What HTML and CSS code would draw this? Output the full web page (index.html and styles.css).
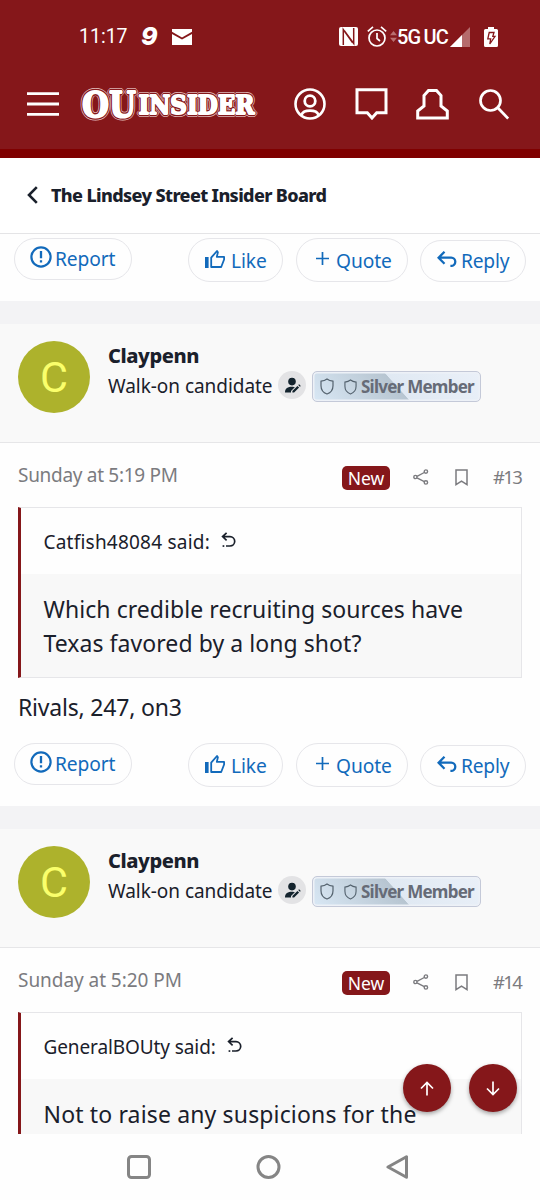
FILE: index.html
```
<!DOCTYPE html>
<html lang="en">
<head>
  <meta charset="UTF-8">
  <meta name="viewport" content="width=device-width, initial-scale=1.0">
  <title>OUInsider</title>
  <link rel="stylesheet" href="styles.css">
</head>
<body>
  <svg class="defs" width="0" height="0">
    <symbol id="i-report" viewBox="0 0 22 22"><circle cx="11" cy="11" r="9.6" fill="none" stroke="currentColor" stroke-width="2.2"/><path d="M11 5v7.3M11 14.2v2.3" fill="none" stroke="currentColor" stroke-width="2.3"/></symbol>
    <symbol id="i-like" viewBox="0 0 20 18"><path d="M0 7h3.6v11H0z" fill="currentColor"/><path d="M6.2 7.6L12 1l.9 1.2-1.1 4.7h7.3v2.6L16.2 17H6.2z" fill="none" stroke="currentColor" stroke-width="1.8" stroke-linejoin="round"/></symbol>
    <symbol id="i-plus" viewBox="0 0 13 13"><path d="M6.5 0v13M0 6.5h13" fill="none" stroke="currentColor" stroke-width="1.7"/></symbol>
    <symbol id="i-reply" viewBox="0 0 20 16"><path d="M7.5.8L1.6 6.7l5.900 6M1.6 6.7h12.600a4.100 4.100 0 0 1 0 8.200h-.8" fill="none" stroke="currentColor" stroke-width="2.300"/></symbol>
    <symbol id="i-edit" viewBox="0 0 28 28"><circle cx="14" cy="10.6" r="3.8" fill="currentColor"/><path d="M7 21.4c0-4 3-5.6 7-5.6 1.400 0 2.300.2 2.800.4L13 20v1.400zM14.400 21.600v-1.700l5-5 1.700 1.700-5 5zM20.200 14.100l.9-.9 1.700 1.700-.9.9z" fill="currentColor"/></symbol>
    <symbol id="i-shield" viewBox="0 0 14 17"><path d="M7 1c1.800 1.400 3.600 2 6 2.200v4.600C13 12 10.500 14.800 7 16 3.500 14.800 1 12 1 7.800V3.200C3.400 3 5.200 2.400 7 1z" fill="none" stroke="currentColor" stroke-width="1.200"/></symbol>
    <symbol id="i-share" viewBox="0 0 16 16"><g fill="none" stroke="currentColor" stroke-width="1.400"><circle cx="2.400" cy="8" r="1.600"/><circle cx="12.900" cy="2.600" r="1.700"/><circle cx="12.900" cy="13.400" r="1.700"/><path d="M4 7.300l7.300-3.800M4 8.800l7.300 3.800"/></g></symbol>
    <symbol id="i-mark" viewBox="0 0 13 17"><path d="M1 1h11v14.600l-5.500-3.400L1 15.600z" fill="none" stroke="currentColor" stroke-width="1.500"/></symbol>
    <symbol id="i-jump" viewBox="0 0 15 16"><path d="M5.600.9L1.600 4.600l4 3.700M1.600 4.600h7.400a4.700 4.700 0 0 1 0 9.400H5" fill="none" stroke="currentColor" stroke-width="1.700"/><path d="M1.600 13.200h1.700v1.700H1.600z" fill="currentColor"/></symbol>
  </svg>

  <div class="screen">
    <header class="header">
      <div class="status">
        <span class="clock">11:17</span>
        <span class="nine">9</span>
        <svg class="mail" width="20" height="16" viewBox="0 0 20 16"><path d="M0 0h20v2.800L10 8.400 0 2.800zM0 5l10 5.500L20 5v11H0z" fill="#fff"/></svg>
        <svg class="nfc" width="19" height="19" viewBox="0 0 19 19"><rect width="19" height="19" rx="2" fill="#fff"/><path d="M4.300 18V2.500l9.200 13M14.700 1v15.500L5.500 4" fill="none" stroke="#85171a" stroke-width="1.500"/></svg>
        <svg class="alarm" width="20" height="21" viewBox="0 0 20 21"><g fill="none" stroke="#fff" stroke-width="1.700"><circle cx="10" cy="12" r="8"/><path d="M10 7v5.500l3 2.500M.8 5.300L6 .9M14 .9l5.200 4.400"/></g></svg>
        <svg class="updown" width="7" height="11" viewBox="0 0 7 11"><path d="M3.500 0L7 4.300H0zM3.500 11L0 6.700h7z" fill="#b96f70"/></svg>
        <span class="net">5G<span>UC</span></span>
        <svg class="signal" width="20" height="20" viewBox="0 0 20 20"><path d="M20 0v20H0z" fill="#b56b6c"/><path d="M12 8v12H0z" fill="#fff"/></svg>
        <svg class="battery" width="14" height="20" viewBox="0 0 14 20"><path d="M4 0h6v2h2.500A1.500 1.500 0 0 1 14 3.500v15a1.500 1.500 0 0 1-1.500 1.500h-11A1.500 1.500 0 0 1 0 18.500v-15A1.500 1.500 0 0 1 1.500 2H4z" fill="#fff"/><path d="M5.200 5.500H10L8.800 9.300H11L5.800 17l.9-5.200H3.800z" fill="none" stroke="#85171a" stroke-width="1.300"/></svg>
      </div>
      <div class="topbar">
        <svg class="burger" width="32" height="24" viewBox="0 0 32 24"><path d="M0 1.700h32M0 12h32M0 22.300h32" stroke="#fff" stroke-width="2.800"/></svg>
        <svg class="logo" width="179" height="36" viewBox="0 0 179 36">
          <defs>
            <g id="wordmark">
              <text class="ou" x="3" y="31" textLength="54" lengthAdjust="spacingAndGlyphs">OU</text>
              <text class="insider" x="59.500" y="28" textLength="116" lengthAdjust="spacingAndGlyphs">INSIDER</text>
            </g>
          </defs>
          <use class="logo-edge" href="#wordmark"/>
          <use class="logo-gap" href="#wordmark"/>
          <use class="logo-face" href="#wordmark"/>
        </svg>
        <svg class="account" width="32" height="32" viewBox="0 0 32 32"><g fill="none" stroke="#fff"><circle cx="16" cy="16" r="14.500" stroke-width="2.600"/><circle cx="16" cy="13" r="5.300" stroke-width="2.800"/><path d="M7.500 27c1-3.400 4.300-4.400 8.500-4.400s7.500 1 8.500 4.400" stroke-width="2.600"/></g></svg>
        <svg class="chat" width="33" height="32" viewBox="0 0 33 32"><path d="M2 1.800h29v23h-9.300L17 30l-4.700-5.200H2z" fill="none" stroke="#fff" stroke-width="3"/></svg>
        <svg class="bell" width="33" height="31" viewBox="0 0 33 31"><path d="M12.500 1.600h8L25 6.500V17l6.300 5v6.900H1.700V22L8 17V6.500z" fill="none" stroke="#fff" stroke-width="3"/></svg>
        <svg class="search" width="30" height="31" viewBox="0 0 30 31"><circle cx="11.500" cy="11.500" r="10" fill="none" stroke="#fff" stroke-width="2.700"/><path d="M18.800 18.800l10.400 10.800" stroke="#fff" stroke-width="2.800"/></svg>
      </div>
    </header>

    <nav class="crumb">
      <svg width="11" height="18" viewBox="0 0 11 18"><path d="M9.800 1.200L2 9l7.800 7.800" fill="none" stroke="#1a202b" stroke-width="2.600"/></svg>
      <span>The Lindsey Street Insider Board</span>
    </nav>

    <main class="thread">
      <div class="actions">
        <a class="pill report"><svg><use href="#i-report"/></svg><span>Report</span></a>
        <a class="pill like"><svg><use href="#i-like"/></svg><span>Like</span></a>
        <a class="pill quote-btn"><svg><use href="#i-plus"/></svg><span>Quote</span></a>
        <a class="pill reply"><svg><use href="#i-reply"/></svg><span>Reply</span></a>
      </div>

      <article class="post">
        <div class="user">
          <div class="avatar">C</div>
          <div class="user-info">
            <div class="name">Claypenn</div>
            <div class="rank">
              <span class="rank-title">Walk-on candidate</span>
              <svg class="edit"><use href="#i-edit"/></svg>
              <span class="silver"><svg class="shield"><use href="#i-shield"/></svg><svg class="shield small"><use href="#i-shield"/></svg><span>Silver Member</span></span>
            </div>
          </div>
        </div>
        <div class="meta">
          <span class="date date-narrow">Sunday at 5:19 PM</span>
          <span class="new">New</span>
          <svg class="share"><use href="#i-share"/></svg>
          <svg class="mark"><use href="#i-mark"/></svg>
          <span class="num">#13</span>
        </div>
        <blockquote class="quote">
          <div class="quote-title"><span class="said">Catfish48084 said:</span><svg><use href="#i-jump"/></svg></div>
          <div class="quote-text">Which credible recruiting sources have<br>Texas favored by a long shot?</div>
        </blockquote>
        <p class="text">Rivals, 247, on3</p>
        <div class="actions">
          <a class="pill report"><svg><use href="#i-report"/></svg><span>Report</span></a>
          <a class="pill like"><svg><use href="#i-like"/></svg><span>Like</span></a>
          <a class="pill quote-btn"><svg><use href="#i-plus"/></svg><span>Quote</span></a>
          <a class="pill reply"><svg><use href="#i-reply"/></svg><span>Reply</span></a>
        </div>
      </article>

      <article class="post">
        <div class="user">
          <div class="avatar">C</div>
          <div class="user-info">
            <div class="name">Claypenn</div>
            <div class="rank">
              <span class="rank-title">Walk-on candidate</span>
              <svg class="edit"><use href="#i-edit"/></svg>
              <span class="silver"><svg class="shield"><use href="#i-shield"/></svg><svg class="shield small"><use href="#i-shield"/></svg><span>Silver Member</span></span>
            </div>
          </div>
        </div>
        <div class="meta">
          <span class="date">Sunday at 5:20 PM</span>
          <span class="new">New</span>
          <svg class="share"><use href="#i-share"/></svg>
          <svg class="mark"><use href="#i-mark"/></svg>
          <span class="num">#14</span>
        </div>
        <blockquote class="quote">
          <div class="quote-title"><span class="said general">GeneralBOUty said:</span><svg><use href="#i-jump"/></svg></div>
          <div class="quote-text wide">Not to raise any suspicions for the</div>
        </blockquote>
      </article>
    </main>

    <div class="jump">
      <button><svg width="14" height="15" viewBox="0 0 14 15"><path d="M7 14.500V1.500M1 7.500l6-6 6 6" fill="none" stroke="#fff" stroke-width="1.700"/></svg></button>
      <button><svg width="14" height="15" viewBox="0 0 14 15"><path d="M7 .5v13M1 7.500l6 6 6-6" fill="none" stroke="#fff" stroke-width="1.700"/></svg></button>
    </div>

    <footer class="navbar">
      <svg width="24" height="24" viewBox="0 0 24 24"><rect x="1.500" y="1.500" width="21" height="21" rx="3" fill="none" stroke="#858585" stroke-width="3"/></svg>
      <svg width="25" height="24" viewBox="0 0 25 24"><circle cx="12.500" cy="12" r="10.500" fill="none" stroke="#858585" stroke-width="3"/></svg>
      <svg width="23" height="24" viewBox="0 0 23 24"><path d="M20.500 1.800v20.400L2 12z" fill="none" stroke="#858585" stroke-width="3" stroke-linejoin="round"/></svg>
    </footer>
  </div>
</body>
</html>
```
FILE: styles.css
```
*, *::before, *::after {
    box-sizing: border-box;
}
body {
    margin: 0;
    font-family: 'Noto Sans', sans-serif;
    background: #fff;
    color: #1a202b;
}
svg {
    display: block;
    flex-shrink: 0;
}
.defs {
    position: absolute;
}
.screen {
    position: relative;
    display: flex;
    flex-direction: column;
    width: 540px;
    height: 1200px;
    overflow: hidden;
}

/* header */
.header {
    height: 158px;
    flex-shrink: 0;
    background: #85171a;
    border-bottom: 9px solid #7f0000;
    color: #fff;
}
.status {
    display: flex;
    align-items: center;
    height: 73px;
    padding-left: 79px;
    font-family: Roboto, sans-serif;
}
.clock {
    width: 62px;
    font-size: 19.5px;
    letter-spacing: 0;
}
.nine {
    width: 31px;
    margin-top: -2px;
    font-family: Inter, sans-serif;
    font-size: 25px;
    font-style: italic;
    font-weight: 800;
}
.nfc {
    margin-left: 147px;
}
.alarm {
    margin-left: 9px;
}
.updown {
    margin-left: 3px;
}
.net {
    width: 53px;
    font-size: 20px;
    font-weight: 500;
    letter-spacing: -0.8px;
    white-space: nowrap;
}
.net span {
    margin-left: 3px;
}
.battery {
    margin-left: 14px;
}
.topbar {
    display: flex;
    align-items: center;
    height: 62px;
    padding-left: 27px;
}
.logo {
    margin-left: 20px;
}
.logo text {
    font-family: 'DejaVu Serif', serif;
    font-weight: bold;
    stroke-linejoin: bevel;
}
.ou {
    font-size: 36px;
}
.insider {
    font-size: 26px;
}
.logo-edge {
    fill: #e9c4c4;
    stroke: #e9c4c4;
    stroke-width: 6;
}
.logo-gap {
    fill: #85171a;
    stroke: #85171a;
    stroke-width: 4.6;
}
.logo-face {
    fill: #fff;
    stroke: #fff;
    stroke-width: 2;
}
.account {
    margin-left: 36px;
}
.chat {
    margin-left: 29px;
}
.bell {
    margin-left: 28px;
}
.search {
    margin-left: 30px;
}

.crumb {
    display: flex;
    align-items: center;
    gap: 13px;
    height: 76px;
    flex-shrink: 0;
    padding: 0 0 2px 27px;
    border-bottom: 1px solid #e4e4e6;
    font-size: 18px;
    font-weight: 800;
}
.crumb span {
    letter-spacing: -0.64px;
}

/* thread */
.thread {
    height: 900px;
    overflow: hidden;
    background: #fefefe;
}
.actions {
    display: flex;
    align-items: flex-start;
    height: 67px;
    padding: 4px 14px 0;
}
.pill {
    display: flex;
    align-items: center;
    height: 44px;
    border: 1.5px solid #e6e6ea;
    border-radius: 22px;
    color: #126abb;
    font-size: 19.2px;
}
.report {
    width: 118px;
    height: 42px;
    padding-left: 15px;
}
.report span {
    margin-top: -1px;
    letter-spacing: -0.1px;
}
.report svg {
    width: 22px;
    height: 22px;
    margin: 0 3px 5px 0;
}
.like {
    width: 95px;
    margin-left: 56px;
    padding-left: 16px;
}
.like span,
.quote-btn span {
    margin-top: 1px;
    letter-spacing: -0.1px;
}
.like svg {
    width: 20px;
    height: 18px;
    margin: 0 6px 2px 0;
}
.quote-btn {
    width: 112px;
    margin-left: 13px;
    padding-left: 19px;
}
.quote-btn svg {
    width: 13px;
    height: 13px;
    margin: 0 7px 3px 0;
}
.reply {
    width: 106px;
    height: 42px;
    margin: 2px 0 0 12px;
    padding-left: 16px;
}
.reply span {
    margin-top: -1px;
    letter-spacing: -0.2px;
}
.reply svg {
    width: 20px;
    height: 16px;
    margin: 0 4px 4px 0;
}
.post {
    border-top: 23px solid #f3f3f5;
}
.user {
    display: flex;
    height: 119px;
    padding: 17px 18px 0;
    background: #f9f9f9;
    border-bottom: 1.5px solid #e6e6e8;
}
.avatar {
    width: 72px;
    height: 72px;
    border-radius: 50%;
    background: #adb22c;
    color: #faff6b;
    font-family: Roboto, sans-serif;
    font-size: 43px;
    font-weight: 400;
    line-height: 72px;
    text-align: center;
}
.user-info {
    margin-left: 18px;
}
.name {
    height: 29px;
    font-size: 20px;
    font-weight: 800;
    line-height: 29px;
    letter-spacing: -0.4px;
}
.rank {
    display: flex;
    align-items: center;
    height: 32px;
}
.rank-title {
    width: 170px;
    margin-top: -1px;
    font-size: 19px;
    letter-spacing: -0.05px;
    white-space: nowrap;
}
.edit {
    width: 28px;
    height: 28px;
    margin-top: -2px;
    border-radius: 50%;
    background: #e3e3e5;
    color: #14242e;
}
.silver {
    display: flex;
    align-items: center;
    width: 169px;
    height: 31px;
    margin-left: 6px;
    padding-left: 7px;
    border: 1.5px solid #c4c9d8;
    border-radius: 5px;
    box-shadow: inset 0 0 0 1.5px #edf1f7;
    background: linear-gradient(48deg, #d9e8f5 0%, #b7c5d1 50%, #e0e9f3 50.5%, #eaf0f8 100%);
    color: #666b77;
    font-size: 17px;
    font-weight: 700;
    letter-spacing: -0.75px;
    white-space: nowrap;
}
.shield {
    width: 14px;
    height: 17px;
    margin-right: 10px;
    color: #53616d;
}
.shield.small {
    width: 13px;
    height: 16px;
    margin: 1px 4px 0 0;
}
.meta {
    display: flex;
    align-items: center;
    height: 64px;
    padding: 5px 18px 0;
    color: #7b7b7f;
    font-size: 19px;
}
.date {
    margin: -5px auto 0 0;
    letter-spacing: -0.05px;
}
.date-narrow {
    letter-spacing: -0.3px;
}
.new {
    width: 48px;
    height: 24px;
    border-radius: 5px;
    background: #85171a;
    color: #fff;
    font-size: 17.5px;
    line-height: 24px;
    text-align: center;
}
.share {
    width: 16px;
    height: 16px;
    margin: -1px 0 0 23px;
}
.mark {
    width: 13px;
    height: 17px;
    margin: -1px 25px 0 26px;
}
.num {
    width: 29px;
    margin-top: -2px;
    font-size: 18.5px;
    letter-spacing: -1.6px;
    white-space: nowrap;
}
.quote {
    height: 171px;
    margin: 0 18px;
    border: 1.5px solid #e6e6e9;
    border-left: 3px solid #85171a;
    background: #f8f8f8;
}
.quote-title {
    display: flex;
    height: 66px;
    padding: 20px 0 0 22.5px;
    background: #fefefe;
    font-size: 19px;
    line-height: 28px;
}
.said {
    letter-spacing: 0.22px;
}
.said.general {
    letter-spacing: -0.1px;
}
.quote-title svg {
    width: 15px;
    height: 16px;
    margin: 4px 0 0 11px;
}
.quote-text {
    padding: 19px 0 0 22.5px;
    font-size: 23px;
    line-height: 33.5px;
    letter-spacing: 0.06px;
    white-space: nowrap;
}
.quote-text.wide {
    letter-spacing: 0.15px;
}
.text {
    height: 61px;
    margin: 0;
    padding: 13px 18px 0;
    font-size: 23px;
    line-height: 33px;
    letter-spacing: -0.2px;
}

/* floating buttons over the thread */
.jump {
    position: absolute;
    top: 1064px;
    right: 23px;
    display: flex;
    gap: 18px;
}
.jump button {
    display: flex;
    align-items: center;
    justify-content: center;
    width: 48px;
    height: 48px;
    padding: 0;
    border: 0;
    border-radius: 50%;
    background: #85171a;
    box-shadow: 0 2px 4px rgba(0, 0, 0, 0.35);
}
.navbar {
    display: flex;
    align-items: center;
    height: 66px;
    flex-shrink: 0;
    padding-left: 127px;
    gap: 105px;
    background: #fefefe;
}
```
